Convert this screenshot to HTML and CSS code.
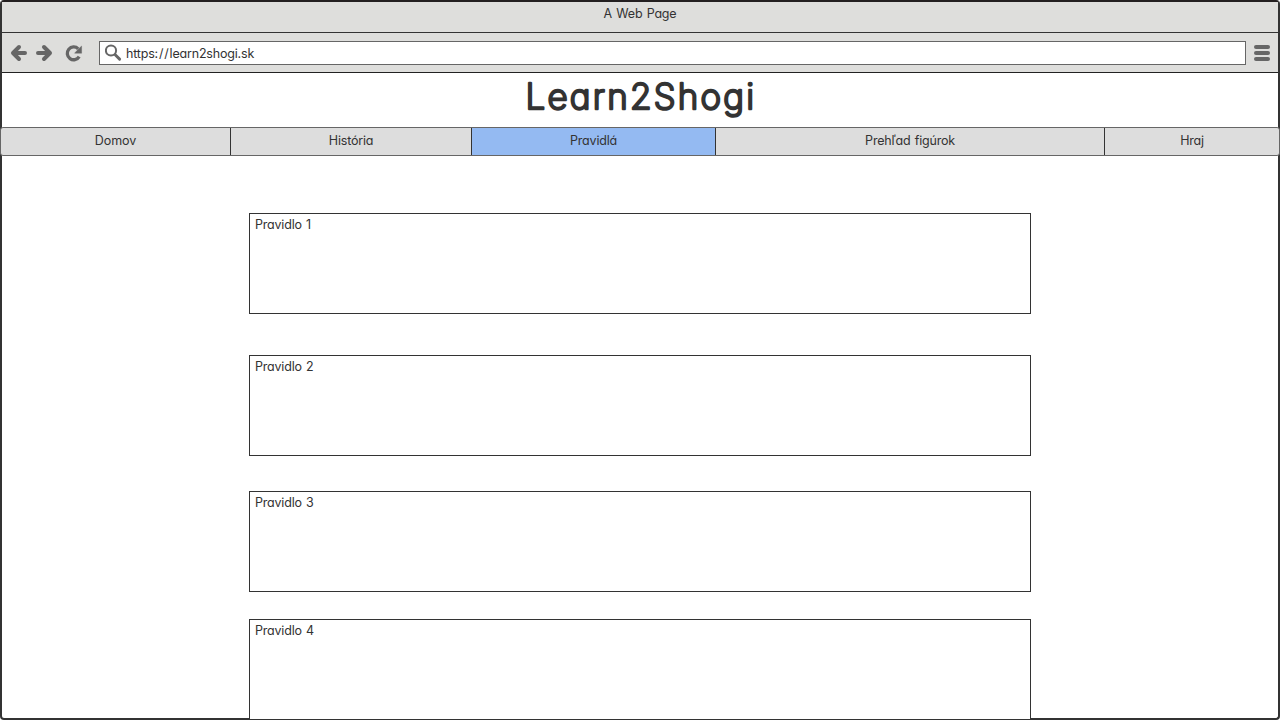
FILE: index.html
```html
<!DOCTYPE html>
<html lang="sk">
<head>
<meta charset="utf-8">
<title>Learn2Shogi</title>
<link rel="stylesheet" href="styles.css">
</head>
<body>
<div class="window">
  <header class="titlebar"><span class="titlebar-text">A Web Page</span></header>
  <div class="toolbar">
    <svg class="nav-icons" width="97" height="38" viewBox="2 34 97 38">
      <g fill="none" stroke="#666" stroke-width="4" stroke-linecap="round" stroke-linejoin="round">
        <path d="M25 53H14M19 47L13 53L19 59"/>
        <path d="M38 53H49M44 47L50 53L44 59"/>
        <path d="M79.2 56.6A6.4 6.4 0 1 1 78.2 48.8" stroke-width="3.3" stroke-linecap="butt"/>
      </g>
      <path d="M81.6 46V53.2H74.6L77 50.5Z" fill="#666" stroke="#666" stroke-width=".4"/>
    </svg>
    <div class="address">
      <svg class="search" width="18" height="18" viewBox="0 0 18 18" fill="none" stroke="#666">
        <circle cx="6" cy="6.5" r="5.1" stroke-width="2"/>
        <path d="M10.2 10.7L14.6 15.1" stroke-width="2.9" stroke-linecap="round"/>
      </svg>
      <span class="url">https<span class="scheme">://</span>learn2shogi.sk</span>
    </div>
    <div class="menu"><i class="menu-bar"></i><i class="menu-bar"></i><i class="menu-bar"></i></div>
  </div>
  <h1 class="heading">
    <svg class="heading-art" width="240" height="54" viewBox="520 73 240 54"><text class="heading-text" x="525.5" y="108.8" textLength="228.5">Learn2Shogi</text></svg>
  </h1>
  <nav class="tabs">
    <a class="tab tab-home">Domov</a>
    <a class="tab tab-history">História</a>
    <a class="tab tab-rules">Pravidlá</a>
    <a class="tab tab-pieces">Prehľad figúrok</a>
    <a class="tab tab-play">Hraj</a>
  </nav>
  <main class="rules">
    <section class="rule rule-1">Pravidlo 1</section>
    <section class="rule rule-2">Pravidlo 2</section>
    <section class="rule rule-3">Pravidlo 3</section>
    <section class="rule rule-4">Pravidlo 4</section>
  </main>
</div>
</body>
</html>
```
FILE: styles.css
```css
* { box-sizing: border-box; }
body {
  margin: 0;
  background: #fff;
  color: #333;
  font: 12.5px/16px Inter, "Open Sans", sans-serif;
  font-feature-settings: "cv11" 1;
  letter-spacing: -0.2px;
  word-spacing: 1px;
}
.window {
  height: 720px;
  border: 2px solid #333;
  border-top-color: #231f20;
  border-radius: 4px;
  background: #fff;
}
.titlebar {
  height: 31px;
  padding-top: 4px;
  border-bottom: 1px solid #333;
  background: #dededc;
  text-align: center;
}
.titlebar-text { letter-spacing: -0.2px; }
.toolbar {
  display: flex;
  align-items: center;
  height: 40px;
  border-bottom: 1px solid #222;
  background: #dededc;
}
.nav-icons { flex: none; }
.address {
  display: flex;
  align-items: center;
  width: 1147px;
  height: 24px;
  padding-left: 5px;
  border: 1px solid #666;
  background: #fff;
}
.url { margin-left: 3px; padding-top: 2px; letter-spacing: -0.19px; }
.scheme { letter-spacing: 0.8px; }
.menu {
  display: flex;
  flex-direction: column;
  gap: 2px;
  margin-left: 8px;
}
.menu-bar { width: 16px; height: 4px; border-radius: 2px; background: #666; }
.heading {
  display: flex;
  justify-content: center;
  height: 54px;
  margin: 0;
}
.heading-text {
  font-size: 35px;
  font-weight: 200;
  letter-spacing: 0;
  fill: #333;
  stroke: #333;
  stroke-width: 2.5px;
  stroke-linejoin: round;
}
.tabs {
  position: relative;
  display: flex;
  width: 1280px;
  height: 29px;
  margin-left: -2px;
  border: 1px solid #666;
  border-radius: 3px;
  background: #ddd;
}
.tab { padding-top: 5px; border-right: 1px solid #333; text-align: center; }
.tab:last-child { border-right: 0; }
.tab-home { width: 230px; letter-spacing: 0; }
.tab-history { width: 241px; }
.tab-rules { width: 244px; background: #94baf2; }
.tab-pieces { width: 389px; }
.tab-play { flex: 1; }
.rules {
  display: flex;
  flex-direction: column;
  width: 782px;
  margin: 57px 0 0 247px;
}
.rule {
  position: relative;
  height: 101px;
  padding: 3px 5px;
  border: 1px solid #333;
  background: #fff;
}
.rule-2 { margin-top: 41px; }
.rule-3 { margin-top: 35px; }
.rule-4 { margin-top: 27px; }
```
